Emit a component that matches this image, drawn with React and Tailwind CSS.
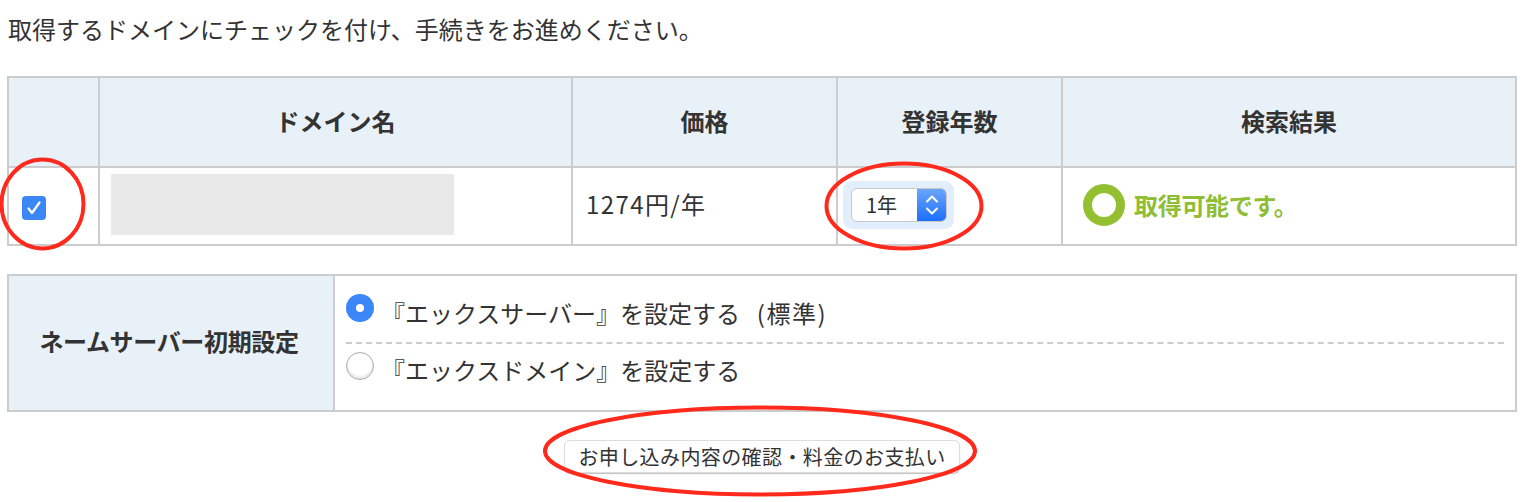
import React from "react";

const font = { fontFamily: '"Noto Sans CJK JP", "Noto Sans", sans-serif' };

const Marks = () => (
  <svg className="absolute left-0 top-0 pointer-events-none" width="1532" height="502" fill="none" stroke="#ff2a1c" strokeWidth="4">
    <ellipse cx="42.5" cy="204" rx="41" ry="44.5" />
    <ellipse cx="904" cy="206" rx="77.5" ry="42.5" />
    <ellipse cx="760" cy="451" rx="215" ry="43.5" />
  </svg>
);

const Radio = ({ checked }) =>
  checked ? (
    <span className="flex items-center justify-center w-[28px] h-[28px] rounded-full bg-[#3c87f7] shrink-0">
      <span className="w-[8px] h-[8px] rounded-full bg-white" />
    </span>
  ) : (
    <span className="block w-[28px] h-[28px] rounded-full bg-white border border-[#aaa] shadow-[inset_0_-2px_3px_rgba(0,0,0,0.12)] shrink-0" />
  );

export default function App() {
  return (
    <div className="relative w-[1532px] h-[502px] overflow-hidden bg-white text-[#333] text-[24px] px-[7px]" style={font}>
      <p className="h-[76px] pt-[11px] pl-px leading-[36px]">取得するドメインにチェックを付け、手続きをお進めください。</p>

      <table className="w-[1510px] table-fixed border-collapse border-2 border-[#ccc]">
        <colgroup>
          <col className="w-[91px]" />
          <col className="w-[473px]" />
          <col className="w-[265px]" />
          <col className="w-[225px]" />
          <col />
        </colgroup>
        <thead>
          <tr className="h-[90px] bg-[#e8f0f8]">
            <th className="border-2 border-[#ccc]"></th>
            <th className="border-2 border-[#ccc] font-bold pb-[3px]">ドメイン名</th>
            <th className="border-2 border-[#ccc] font-bold pb-[3px]">価格</th>
            <th className="border-2 border-[#ccc] font-bold pb-[3px]">登録年数</th>
            <th className="border-2 border-[#ccc] font-bold pb-[3px]">検索結果</th>
          </tr>
        </thead>
        <tbody>
          <tr className="h-[78px]">
            <td className="border-2 border-[#ccc] pl-[13px] pt-[4px]">
              <span className="flex items-center justify-center w-[24px] h-[24px] rounded-[4px] bg-[#3c87f7]">
                <svg width="16" height="16" viewBox="0 0 16 16" fill="none" stroke="#fff" strokeWidth="2.2" strokeLinecap="round" strokeLinejoin="round">
                  <path d="M2.5 8.5 6 13 13.5 2.5" />
                </svg>
              </span>
            </td>
            <td className="border-2 border-[#ccc] pl-[11px] pb-[4px]">
              <div className="w-[343px] h-[61px] bg-[#e9e9e9]" />
            </td>
            <td className="border-2 border-[#ccc] pl-[13px] pb-[4px] tracking-[1.4px]">1274円/年</td>
            <td className="border-2 border-[#ccc] pl-[5px] pb-[2px]">
              <div className="w-[111px] h-[48px] pl-[8px] pr-[7px] py-[7px] rounded-[9px] bg-[#e3eefd]">
                <div className="flex h-[34px] rounded-[6px] overflow-hidden bg-white border border-[#c8c8c8]">
                  <span className="flex-1 pl-[14px] text-[20px] leading-[32px]">1年</span>
                  <span className="flex items-center justify-center w-[29px] bg-gradient-to-b from-[#6aa5fb] to-[#1a6dfb]">
                    <svg width="16" height="26" viewBox="0 0 16 26" fill="none" stroke="#fff" strokeWidth="2" strokeLinecap="round" strokeLinejoin="round">
                      <path d="M3 9.5 8 4.5 13 9.5" />
                      <path d="M3 16.5 8 21.5 13 16.5" />
                    </svg>
                  </span>
                </div>
              </div>
            </td>
            <td className="border-2 border-[#ccc] pl-[20px] pb-[2px]">
              <div className="flex items-center gap-[9px] text-[#8fbd33] font-bold">
                <span className="w-[42px] h-[42px] rounded-full border-[9px] border-[#94bf30]" />
                <span className="tracking-[-0.3px]">取得可能です。</span>
              </div>
            </td>
          </tr>
        </tbody>
      </table>

      <table className="mt-[28px] w-[1510px] table-fixed border-collapse border-2 border-[#ccc]">
        <colgroup>
          <col className="w-[326px]" />
          <col />
        </colgroup>
        <tbody>
          <tr className="h-[136px]">
            <th className="border-2 border-[#ccc] bg-[#e8f0f8] font-bold pb-[5px] pr-[4px] tracking-[-0.35px]">ネームサーバー初期設定</th>
            <td className="border-2 border-[#ccc] px-[11px] align-top">
              <div className="flex items-start gap-[7px] h-[68px] border-b-2 border-dashed border-[#ccc]">
                <span className="block mt-[18px]"><Radio checked /></span>
                <span className="mt-[19px] leading-[36px] whitespace-pre">『エックスサーバー』を設定する  <span className="ml-[6px] tracking-[1.5px]">(標準)</span></span>
              </div>
              <div className="flex items-start gap-[7px]">
                <span className="block mt-[8px]"><Radio /></span>
                <span className="mt-[8px] leading-[36px]">『エックスドメイン』を設定する</span>
              </div>
            </td>
          </tr>
        </tbody>
      </table>

      <div className="flex justify-center mt-[28px] mr-[8px]">
        <button className="w-[396px] h-[33px] rounded-[6px] bg-white border border-[#ddd] shadow-[0_1px_1px_rgba(0,0,0,0.25)] text-[20px] leading-[30px] tracking-[0.4px] text-[#333]">
          お申し込み内容の確認・料金のお支払い
        </button>
      </div>

      <Marks />
    </div>
  );
}
